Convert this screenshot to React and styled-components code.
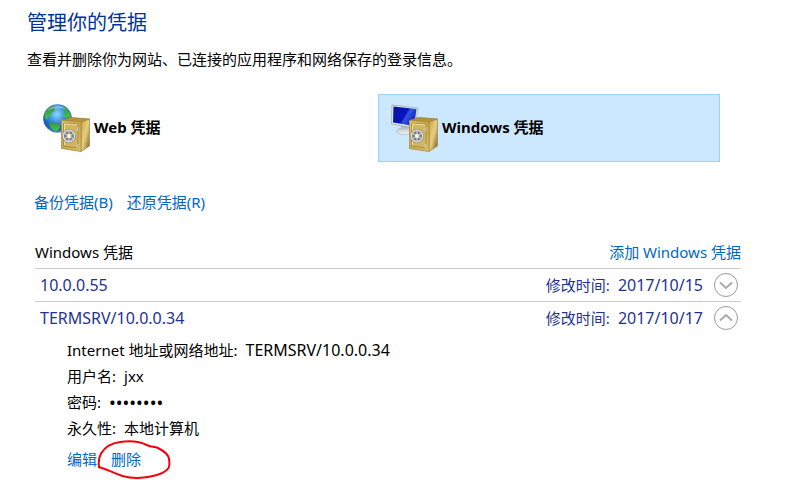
import React, { useState } from "react";
import styled, { createGlobalStyle } from "styled-components";

const GlobalStyle = createGlobalStyle`
  * { box-sizing: border-box; }
  body {
    margin: 0;
    background: #fff;
    color: #000;
    font: 15px/26px "Noto Sans", "Noto Sans CJK SC", sans-serif;
  }
`;

const Page = styled.main`
  padding: 8px 56px 8px 27px;
`;

const Title = styled.h1`
  margin: 0;
  color: #003399;
  font-size: 20px;
  font-weight: 400;
  line-height: 30px;
`;

const Intro = styled.p`
  margin: 8px 0 0;
`;

const Tiles = styled.nav`
  display: grid;
  grid-template-columns: 1fr 1fr;
  gap: 6px;
  margin: 22px 21px 0 3px;
`;

const Tile = styled.button`
  display: flex;
  align-items: center;
  gap: 3px;
  height: 68px;
  padding: 0 12px;
  border: 1px solid ${(p) => (p.$selected ? "#99d1ff" : "transparent")};
  background: ${(p) => (p.$selected ? "#cce8ff" : "transparent")};
  color: #000;
  font: inherit;
  font-size: 15px;
  font-weight: 700;
  text-align: left;
`;

const TileIcon = styled.svg`
  width: 48px;
  height: 48px;
  flex: none;
`;

const TileLabel = styled.span`
  padding-bottom: 2px;
`;

const Link = styled.a`
  color: #0066cc;
  text-decoration: none;
`;

const Actions = styled.div`
  display: flex;
  gap: 14px;
  margin: 27px 0 0 7px;
`;

const Vault = styled.section`
  margin: 24px 0 0 8px;
`;

const VaultHeader = styled.header`
  display: flex;
  justify-content: space-between;
  height: 29px;
`;

const VaultTitle = styled.h2`
  margin: 0;
  font-size: 15px;
  font-weight: 400;
  line-height: 26px;
`;

const Row = styled.div`
  display: flex;
  align-items: center;
  height: 33px;
  padding: 0 2px 0 5px;
  border-top: 1px solid #cccccc;
  color: #1f3390;
`;

const RowName = styled.span`
  flex: 1;
  font-size: 16px;
`;

const Stamp = styled.span`
  display: flex;
  gap: 8px;
  margin-right: 10px;
`;

const StampDate = styled.time`
  font-size: 16px;
`;

const Toggle = styled.button`
  display: flex;
  padding: 0;
  border: 0;
  background: none;
`;

const Details = styled.div`
  padding: 3px 0 0 32px;
`;

const Fields = styled.dl`
  margin: 0;
`;

const Field = styled.div`
  display: flex;
  gap: 8px;
`;

const Label = styled.dt``;

const Value = styled.dd`
  margin: 0;
  font-size: ${(p) => (p.$address ? "16px" : "15px")};
`;

const Secret = styled(Value)`
  font-size: 18px;
`;

const EditLinks = styled.div`
  display: flex;
  gap: 14px;
  margin-top: 5px;
`;

const Marked = styled.span`
  position: relative;
`;

const Ring = styled.svg`
  position: absolute;
  left: -14px;
  top: -7px;
  pointer-events: none;
`;

function Safe({ id }) {
  return (
    <g>
      <defs>
        <linearGradient id={`${id}-front`} x1="0" y1="0" x2="1" y2="1">
          <stop offset="0" stopColor="#e6cf85" />
          <stop offset="0.5" stopColor="#c9a94f" />
          <stop offset="1" stopColor="#dcc06c" />
        </linearGradient>
        <linearGradient id={`${id}-side`} x1="0" y1="0" x2="1" y2="1">
          <stop offset="0" stopColor="#c9a446" />
          <stop offset="0.5" stopColor="#e6cf82" />
          <stop offset="1" stopColor="#7a571a" />
        </linearGradient>
      </defs>
      <path d="M18.5 16.5 28 13.5l18.5 1.5-8 3z" fill="#b8923c" stroke="#a58034" strokeWidth=".8" />
      <path d="M38 18l8.5-3v27L38 47.5z" fill={`url(#${id}-side)`} stroke="#9c7a35" strokeWidth=".6" />
      <path d="M18.5 16.5 38 18v29.5l-19.5-3z" fill={`url(#${id}-front)`} stroke="#ad8c40" strokeWidth=".8" />
      <path d="M20.5 19l14.5 1v24l-14.5-2z" fill="#d2b65f" stroke="#9e7d32" strokeWidth=".7" />
      <path d="M21.5 41V20l13 1" fill="none" stroke="#f4e8b5" strokeWidth=".8" />
      <path d="M34.5 23v4M34.5 40v4" stroke="#c5c2b4" strokeWidth="1.8" />
      <circle cx="26" cy="32" r="7" fill="#7d7d7a" />
      <circle cx="26" cy="32" r="5.8" fill="#85857f" stroke="#dededb" strokeWidth="1.4" />
      <path d="M26 26v12M20.8 29l10.4 6M20.8 35l10.4-6" stroke="#d8d8d5" strokeWidth="1" />
      <circle cx="26" cy="32" r="2" fill="#f6f6f4" />
    </g>
  );
}

function WebIcon() {
  return (
    <TileIcon viewBox="0 0 48 48" aria-hidden="true">
      <defs>
        <radialGradient id="ocean" cx=".48" cy=".35" r=".65">
          <stop offset="0" stopColor="#8fd6fa" />
          <stop offset=".45" stopColor="#348fdc" />
          <stop offset=".8" stopColor="#1858b5" />
          <stop offset="1" stopColor="#5994cf" />
        </radialGradient>
        <linearGradient id="land" x1="0" y1="0" x2="0" y2="1">
          <stop offset="0" stopColor="#3f8a4c" />
          <stop offset="1" stopColor="#3dcc3f" />
        </linearGradient>
      </defs>
      <circle cx="14.5" cy="14.5" r="14.3" fill="url(#ocean)" />
      <path d="M2 9C4 5 7 3 10 2l3 1-2 3 1 1-3 1-2 4-2 1-1 3c-2-1-3-4-2-7z" fill="url(#land)" />
      <path d="M6 20c2-2 4-3 7-1l4 2v3l-3 3c-4 0-7-3-8-7z" fill="url(#land)" />
      <path d="M19 3c2 0 4 1 5 2 3 3 4 6 4 9l-3-1-3 1-2-4 2-2z" fill="url(#land)" />
      <path d="M4 7c5-7 16-7 20-1-6-2-14-2-20 1z" fill="#fff" opacity=".3" />
      <Safe id="web-safe" />
    </TileIcon>
  );
}

function WindowsIcon() {
  return (
    <TileIcon viewBox="0 0 48 48" aria-hidden="true">
      <defs>
        <linearGradient id="screen" x1="0" y1="0" x2="1" y2=".5">
          <stop offset="0" stopColor="#0a1590" />
          <stop offset=".58" stopColor="#0714c4" />
          <stop offset=".66" stopColor="#3456df" />
          <stop offset="1" stopColor="#0e24c4" />
        </linearGradient>
        <linearGradient id="stand" x1="0" y1="0" x2="0" y2="1">
          <stop offset="0" stopColor="#b5bbbf" />
          <stop offset="1" stopColor="#f7f9fa" />
        </linearGradient>
      </defs>
      <path d="M10 22h10l1 6H11z" fill="#aeb7bd" />
      <ellipse cx="14" cy="27" rx="8.5" ry="3.5" fill="url(#stand)" stroke="#b2bbc1" strokeWidth=".8" />
      <path d="M1 1l26 3-3 20L.5 20z" fill="#e6edf2" stroke="#9ba9b3" strokeWidth=".8" />
      <path d="M2.5 2.5 25.5 5 23 22 2 18.500z" fill="url(#screen)" />
      <Safe id="windows-safe" />
    </TileIcon>
  );
}

function Chevron({ up }) {
  return (
    <svg width="26" height="26" viewBox="0 0 26 26" fill="none" aria-hidden="true">
      <circle cx="13" cy="13" r="11.5" stroke="#999" />
      <path d={up ? "M7 15.500 13 10l6 5.500" : "M7 10.500 13 16l6-5.500"} stroke="#aaa" strokeWidth="2" />
    </svg>
  );
}

function Credential({ name, date, initiallyOpen = false, children }) {
  const [open, setOpen] = useState(initiallyOpen);
  return (
    <article>
      <Row>
        <RowName>{name}</RowName>
        <Stamp>
          <span>修改时间:</span>
          <StampDate>{date}</StampDate>
        </Stamp>
        <Toggle type="button" aria-label={name} aria-expanded={open} onClick={() => setOpen(!open)}>
          <Chevron up={open} />
        </Toggle>
      </Row>
      {open && children}
    </article>
  );
}

export default function App() {
  return (
    <>
      <GlobalStyle />
      <Page lang="zh-CN">
        <Title>管理你的凭据</Title>
        <Intro>查看并删除你为网站、已连接的应用程序和网络保存的登录信息。</Intro>
        <Tiles>
          <Tile type="button">
            <WebIcon />
            <TileLabel>Web 凭据</TileLabel>
          </Tile>
          <Tile type="button" $selected aria-pressed="true">
            <WindowsIcon />
            <TileLabel>Windows 凭据</TileLabel>
          </Tile>
        </Tiles>
        <Actions>
          <Link href="#backup">备份凭据(B)</Link>
          <Link href="#restore">还原凭据(R)</Link>
        </Actions>
        <Vault>
          <VaultHeader>
            <VaultTitle>Windows 凭据</VaultTitle>
            <Link href="#add">添加 Windows 凭据</Link>
          </VaultHeader>
          <Credential name="10.0.0.55" date="2017/10/15" />
          <Credential name="TERMSRV/10.0.0.34" date="2017/10/17" initiallyOpen>
            <Details>
              <Fields>
                <Field>
                  <Label>Internet 地址或网络地址:</Label>
                  <Value $address>TERMSRV/10.0.0.34</Value>
                </Field>
                <Field>
                  <Label>用户名:</Label>
                  <Value>jxx</Value>
                </Field>
                <Field>
                  <Label>密码:</Label>
                  <Secret>••••••••</Secret>
                </Field>
                <Field>
                  <Label>永久性:</Label>
                  <Value>本地计算机</Value>
                </Field>
              </Fields>
              <EditLinks>
                <Link href="#edit">编辑</Link>
                <Marked>
                  <Link href="#delete">删除</Link>
                  <Ring width="76" height="40" viewBox="0 0 76 40" fill="none" aria-hidden="true">
                    <path
                      d="M2 28.500C1.500 24 2 18 4 14.500 8 8 15 4 23 3c9-1.500 19-1 28 3.500 3 1.500 7 1 10 2.500 6 3 10.500 7 11 11 .5 3 .5 7-.5 9-3 5-10 7-18 8.500-9 2-19 2-28-.5C16 34 12 31 2 28z"
                      stroke="#f5000c"
                      strokeWidth="2"
                      strokeLinejoin="round"
                    />
                  </Ring>
                </Marked>
              </EditLinks>
            </Details>
          </Credential>
        </Vault>
      </Page>
    </>
  );
}
